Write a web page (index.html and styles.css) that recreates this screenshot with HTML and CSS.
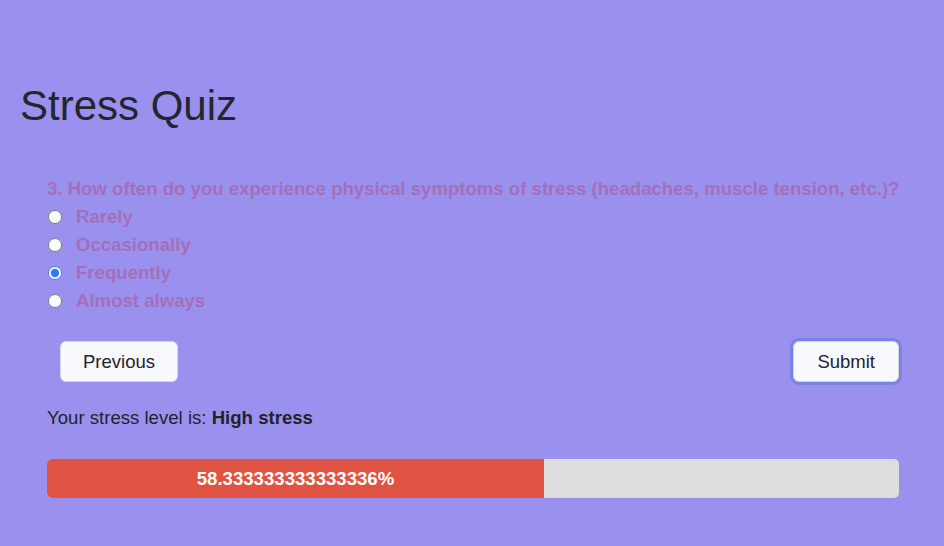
FILE: index.html
```html
<!DOCTYPE html>
<html lang="en">
<head>
<meta charset="utf-8">
<title>Stress Quiz</title>
<link rel="stylesheet" href="styles.css">
</head>
<body>
  <main class="page">
    <h1 class="title">Stress Quiz</h1>
    <section class="quiz">
      <p class="question">3. How often do you experience physical symptoms of stress (headaches, muscle tension, etc.)?</p>
      <label class="option"><input type="radio" name="q3"><span>Rarely</span></label>
      <label class="option"><input type="radio" name="q3"><span>Occasionally</span></label>
      <label class="option"><input type="radio" name="q3" checked><span>Frequently</span></label>
      <label class="option"><input type="radio" name="q3"><span>Almost always</span></label>
      <div class="actions">
        <button class="btn">Previous</button>
        <button class="btn btn-focus">Submit</button>
      </div>
      <p class="result">Your stress level is: <strong>High stress</strong></p>
      <div class="progress">
        <div class="progress-fill" style="width: 58.333333333333336%">58.333333333333336%</div>
      </div>
    </section>
  </main>
</body>
</html>
```
FILE: styles.css
```css
html, body {
  margin: 0;
  padding: 0;
}
body {
  background: #9a91ee;
  font-family: "Liberation Sans", Arial, Helvetica, sans-serif;
  color: #23232b;
  width: 944px;
  height: 546px;
  overflow: hidden;
}
.page {
  padding: 81px 45px 0 20px;
}
.title {
  margin: 0;
  font-size: 42px;
  line-height: 50px;
  font-weight: 400;
  color: #25252d;
}
.quiz {
  margin-top: 44px;
  padding-left: 27px;
  font-size: 18.6px;
  line-height: 28px;
}
.question {
  margin: 0;
  font-weight: 700;
  color: #a46fb8;
  white-space: nowrap;
}
.option {
  display: flex;
  align-items: center;
  height: 28px;
  font-weight: 700;
  color: #a46fb8;
}
.option input {
  width: 14px;
  height: 14px;
  margin: 0 14px 0 1px;
  accent-color: #3478f6;
}
.actions {
  display: flex;
  justify-content: space-between;
  align-items: center;
  margin-top: 26px;
  padding-left: 13px;
}
.btn {
  font-family: inherit;
  font-size: 18.5px;
  color: #23232b;
  background: #f8f9fc;
  border: 1px solid #d4d4dc;
  border-radius: 6px;
  height: 41px;
  padding: 0 22px;
}
.btn-focus {
  padding: 0 23px;
  box-shadow: 0 0 0 3px #7a82e6;
}
.result {
  margin: 22px 0 0;
}
.result strong {
  font-weight: 700;
}
.progress {
  margin-top: 27px;
  height: 39px;
  background: #dddddd;
  border-radius: 5px;
  overflow: hidden;
  display: flex;
}
.progress-fill {
  background: #e05242;
  color: #ffffff;
  font-weight: 700;
  display: flex;
  align-items: center;
  justify-content: center;
  white-space: nowrap;
}
```
